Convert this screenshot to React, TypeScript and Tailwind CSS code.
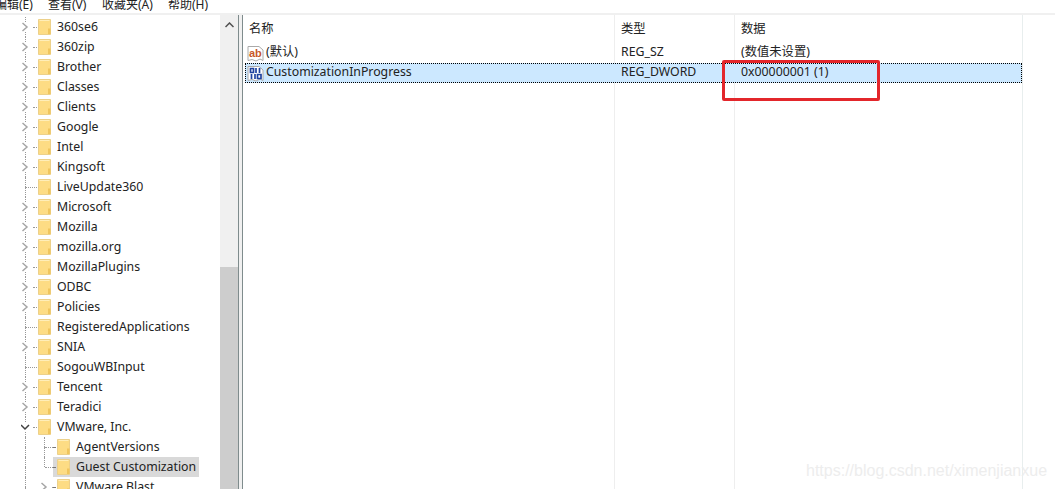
import React from 'react';

const font = "font-['Noto_Sans','Noto_Sans_CJK_SC',sans-serif]";

const keys = ['360se6', '360zip', 'Brother', 'Classes', 'Clients', 'Google', 'Intel', 'Kingsoft', 'LiveUpdate360', 'Microsoft', 'Mozilla', 'mozilla.org', 'MozillaPlugins', 'ODBC', 'Policies', 'RegisteredApplications', 'SNIA', 'SogouWBInput', 'Tencent', 'Teradici'];
const noArrow = ['LiveUpdate360', 'SogouWBInput', 'RegisteredApplications'];

const Folder = () => (
  <svg width="13" height="16" viewBox="0 0 13 16" className="shrink-0">
    <path d="M0.5 0.5H12.5V15.5H0.5Z" fill="#fddc84" stroke="#ecd08a" />
    <path d="M10 15V9.5H12.5V15Z" fill="#f0c55c" />
    <path d="M1.5 1.5H11.5" stroke="#ffeeb8" />
  </svg>
);

const Chevron = ({ open = false }: { open?: boolean }) => (
  <svg width="9" height="10" viewBox={open ? '1 0 9 10' : '0 0 9 10'} className="shrink-0">
    {open ? (
      <path d="M1 3L5 7L9 3" fill="none" stroke="#404040" strokeWidth="1.5" />
    ) : (
      <path d="M1.5 1L6 5L1.5 9" fill="none" stroke="#a6a6a6" strokeWidth="1.5" />
    )}
  </svg>
);

// dotted tree guide above and below the expander
const Guide = ({ children, bottom = true }: { children?: React.ReactNode; bottom?: boolean }) => (
  <div className="flex h-5 w-[9px] shrink-0 flex-col items-center">
    <div className="w-0 flex-1 border-l border-dotted border-[#999]" />
    {children}
    <div className={`w-0 flex-1 border-l border-dotted ${bottom ? 'border-[#999]' : 'border-transparent'}`} />
  </div>
);

const KeyRow = ({ name, open, arrow = true }: { name: string; open?: boolean; arrow?: boolean }) => (
  <div className="flex h-5 items-center pl-[21px]">
    <Guide>{arrow && <Chevron open={open} />}</Guide>
    {arrow ? (
      <div className="ml-[3px] w-[4px] border-t border-dotted border-[#999]" />
    ) : (
      <div className="ml-[-4px] w-[11px] border-t border-dotted border-[#999]" />
    )}
    <div className="ml-[1px]"><Folder /></div>
    <span className="ml-[6px] whitespace-nowrap">{name}</span>
  </div>
);

const SubRow = ({ name, selected, arrow }: { name: string; selected?: boolean; arrow?: boolean }) => (
  <div className="flex h-5 items-center pl-[21px]">
    <Guide />
    <div className="ml-[10px] flex w-[9px] justify-center">
      {arrow ? <Chevron /> : <Guide bottom={!selected} />}
    </div>
    {arrow ? (
      <div className="ml-[3px] w-[1px] border-t border-dotted border-[#999]" />
    ) : (
      <div className="ml-[-4px] w-[8px] border-t border-dotted border-[#999]" />
    )}
    <div className={`flex h-5 items-center ${selected ? 'w-[146px] bg-[#d9d9d9]' : ''}`}>
      <div className="w-[2px] border-t border-dotted border-[#777]" />
      <div className="ml-[2px]"><Folder /></div>
      <span className="ml-[6px] whitespace-nowrap">{name}</span>
    </div>
  </div>
);

const Sheet = () => <path d="M1 1.5H12L16 5V15.5L13 14L9 16L5 14.5L1 15.5Z" fill="#fff" stroke="#aaa" />;

const AbIcon = () => (
  <svg width="17" height="17" viewBox="0 0 17 17" className="shrink-0">
    <Sheet />
    <text x="2" y="12" fontSize="11" fontWeight="700" fill="#c8582a" fontFamily="Liberation Sans">ab</text>
  </svg>
);

const BinIcon = () => (
  <svg width="17" height="17" viewBox="0 0 17 17" className="shrink-0">
    <Sheet />
    <path d="M3.5 3.5H6.5V7.5H3.5ZM9 3V8M12.5 3V8M4.5 9V14M8 9V14M10.5 9.5H14V13.5H10.5Z" fill="none" stroke="#1f43a0" strokeWidth="1.7" />
  </svg>
);

const Row = ({ icon, name, type, data, selected }: { icon: React.ReactNode; name: string; type: string; data: string; selected?: boolean }) => (
  <div className={`flex h-5 items-center border border-dotted ${selected ? 'border-black bg-[#cce8ff]' : 'border-transparent'}`}>
    <div className="flex w-[368px] items-center pl-[1px]">
      {icon}
      <span className="ml-[2px] mt-[-2px] whitespace-nowrap">{name}</span>
    </div>
    <div className="mt-[-2px] w-[120px] pl-[7px]">{type}</div>
    <div className="mt-[-2px] pl-[7px]">{data}</div>
  </div>
);

export default function App() {
  return (
    <div className={`${font} relative h-[489px] w-[1055px] overflow-hidden bg-white text-[12.3px] leading-5 text-[#222]`}>
      <div className="flex h-[13px] items-end overflow-hidden bg-white text-[12px] leading-[18px]">
        <div className="ml-[-5px] flex h-[17px] gap-[14px] whitespace-nowrap">
          <span className="mr-[2px] w-[37px]">编辑(E)</span>
          <span className="w-[40px]">查看(V)</span>
          <span className="w-[52px]">收藏夹(A)</span>
          <span>帮助(H)</span>
        </div>
      </div>
      <div className="flex h-[476px] bg-[#f0f0f0] pt-[2px]">
        <div className="flex w-[239px] border-r border-[#7f8c8d] bg-white">
          <div className="w-[220px] overflow-hidden pt-[2px]">
            {keys.map((k) => (
              <KeyRow key={k} name={k} arrow={!noArrow.includes(k)} />
            ))}
            <KeyRow name="VMware, Inc." open />
            <SubRow name="AgentVersions" />
            <SubRow name="Guest Customization" selected />
            <SubRow name="VMware Blast" arrow />
          </div>
          <div className="flex flex-1 flex-col bg-[#f0f0f0]">
            <div className="flex h-[252px] justify-center pt-[7px]">
              <svg width="9" height="6" viewBox="0 0 9 6">
                <path d="M0.5 5L4.5 1L8.5 5" fill="none" stroke="#505050" strokeWidth="1.5" />
              </svg>
            </div>
            <div className="flex-1 bg-[#cdcdcd]" />
          </div>
        </div>
        <div className="relative ml-[3px] flex-1 border-l border-[#7f8c8d] bg-white">
          <div className="flex h-[22px] items-center">
            <div className="h-full w-[371px] pl-[6px] pt-[4px]">名称</div>
            <div className="h-full w-[120px] pl-[7px] pt-[4px]">类型</div>
            <div className="h-full w-[288px] pl-[7px] pt-[4px]">数据</div>
          </div>
          <div className="absolute bottom-0 left-[371px] top-0 w-px bg-[#eeeeee]" />
          <div className="absolute bottom-0 left-[491px] top-0 w-px bg-[#eeeeee]" />
          <div className="absolute bottom-0 left-[779px] top-0 w-px bg-[#e8eeee]" />
          <div className="relative ml-[2px] w-[777px] pt-[6px]">
            <Row icon={<AbIcon />} name="(默认)" type="REG_SZ" data="(数值未设置)" />
            <Row icon={<BinIcon />} name="CustomizationInProgress" type="REG_DWORD" data="0x00000001 (1)" selected />
          </div>
        </div>
      </div>
      <div className="absolute left-[722px] top-[60px] h-[41px] w-[158px] rounded-[2px] border-[3px] border-[#e3262b]" />
      <div className="absolute left-[806px] top-[461px] font-['Liberation_Sans',sans-serif] text-[16px] leading-5 text-[#ededed]">https://blog.csdn.net/ximenjianxue</div>
    </div>
  );
}
